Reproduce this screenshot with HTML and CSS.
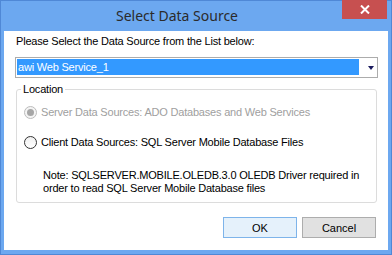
FILE: index.html
```html
<!DOCTYPE html>
<html lang="en">
<head>
<meta charset="utf-8"/>
<title>Select Data Source</title>
<link rel="stylesheet" href="styles.css">
</head>
<body>
<div class="window">
    <!-- Заголовок окна -->
    <div class="titlebar">
        <span class="title">Select Data Source</span>
        <button class="close-btn">
            <svg width="10" height="9" viewBox="0 0 10 9"><path d="M1 0.5L9 8.5M9 0.5L1 8.5" stroke="#fff" stroke-width="2"/></svg>
        </button>
    </div>
    <div class="client">
        <p class="prompt">Please Select the Data Source from the List below:</p>
        <div class="combo">
            <span class="combo-value">awi Web Service_1</span>
            <span class="combo-arrow"></span>
        </div>
        <fieldset class="group">
            <legend>Location</legend>
            <div class="radio-row disabled">
                <span class="radio checked"></span>
                <span>Server Data Sources: ADO Databases and Web Services</span>
            </div>
            <div class="radio-row">
                <span class="radio"></span>
                <span>Client Data Sources: SQL Server Mobile Database Files</span>
            </div>
            <p class="note">Note: SQLSERVER.MOBILE.OLEDB.3.0 OLEDB Driver required in<br>order to read SQL Server Mobile Database files</p>
        </fieldset>
        <div class="buttons">
            <button class="btn btn-default">OK</button>
            <button class="btn">Cancel</button>
        </div>
    </div>
</div>
</body>
</html>
```

FILE: styles.css
```css
body {
    margin: 0;
    font-family: "Liberation Sans", Arial, sans-serif;
    font-size: 11px;
    letter-spacing: -0.2px;
    color: #000;
}

.window {
    width: 392px;
    height: 255px;
    box-sizing: border-box;
    border: 1px solid #4f88d6;
    background: #6ca8f0;
    padding: 0 3px 4px 3px;
    display: flex;
    flex-direction: column;
}

.titlebar {
    height: 30px;
    flex-shrink: 0;
    display: flex;
    justify-content: center;
    align-items: center;
    padding-right: 38px;
    position: relative;
}

.title {
    font-family: "Noto Sans", sans-serif;
    font-size: 14px;
    letter-spacing: 0;
    color: #2b2b2b;
    margin-top: -1px;
}

.close-btn {
    position: absolute;
    top: -1px;
    right: 1px;
    width: 45px;
    height: 19px;
    border: none;
    padding: 0;
    background: #c75050;
    display: flex;
    justify-content: center;
    align-items: center;
}

.client {
    flex: 1;
    background: #fff;
    padding: 4px 10px 0 11px;
    display: flex;
    flex-direction: column;
}

.prompt {
    margin: 0 0 9px 1px;
    line-height: 13px;
}

.combo {
    height: 21px;
    box-sizing: border-box;
    border: 1px solid #acacac;
    padding: 1px;
    display: flex;
    align-items: stretch;
}

.combo-value {
    width: 341px;
    background: #3399ff;
    color: #fff;
    line-height: 16px;
    padding-left: 1px;
    margin-bottom: 1px;
}

.combo-arrow {
    margin: 7px 0 0 9px;
    width: 0;
    height: 0;
    border-left: 3px solid transparent;
    border-right: 3px solid transparent;
    border-top: 4px solid #1b1b5e;
}

.group {
    margin: 5px 1px 0 1px;
    padding: 0 0 7px 7px;
    border: 1px solid #dcdcdc;
    border-radius: 3px;
}

.group legend {
    margin-left: -3px;
    padding: 0 2px;
    line-height: 13px;
}

.radio-row {
    display: flex;
    align-items: center;
    gap: 4px;
    line-height: 13px;
    margin-top: 10px;
}

.radio-row + .radio-row {
    margin-top: 17px;
}

.radio-row.disabled {
    color: #a0a0a0;
}

.radio {
    width: 13px;
    height: 13px;
    box-sizing: border-box;
    border: 1px solid #333;
    border-radius: 50%;
    background: linear-gradient(#f0f0f0, #fff);
    display: flex;
    justify-content: center;
    align-items: center;
}

.disabled .radio {
    border-color: #bcbcbc;
    background: #f4f4f4;
}

.radio.checked::after {
    content: "";
    width: 7px;
    height: 7px;
    border-radius: 50%;
    background: #a6a6a6;
}

.note {
    margin: 20px 0 0 19px;
    line-height: 13px;
}

.buttons {
    margin-top: 14px;
    display: flex;
    justify-content: flex-end;
    gap: 5px;
    padding-right: 2px;
}

.btn {
    width: 74px;
    height: 21px;
    font-family: "Liberation Sans", Arial, sans-serif;
    font-size: 11px;
    color: #000;
    background: #e1e1e1;
    border: 1px solid #adadad;
    padding: 0;
}

.btn-default {
    background: #e5f1fb;
    border-color: #7eb4ea;
}
```
